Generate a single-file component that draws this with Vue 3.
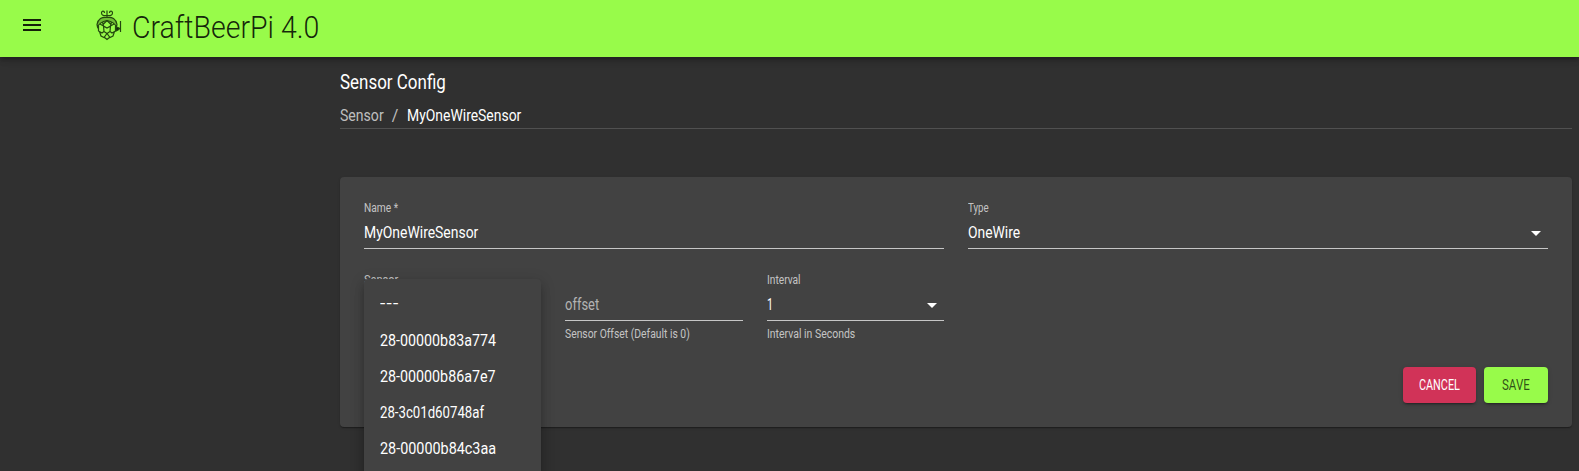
<script setup>
const items = [
  { text: '---', w: 19 },
  { text: '28-00000b83a774', w: 116 },
  { text: '28-00000b86a7e7', w: 116 },
  { text: '28-3c01d60748af', w: 104 },
  { text: '28-00000b84c3aa', w: 116 }
]

// Condenses a label horizontally to the given width.
const vFit = {
  mounted(el, { value }) {
    const apply = () => {
      const w = el.offsetWidth
      el.style.transform = `scaleX(${value / w})`
      el.style.marginRight = `${value - w}px`
    }
    apply()
    document.fonts.ready.then(apply)
  }
}
</script>

<template>
  <div class="page">
    <header class="appbar">
      <svg class="menu-icon" viewBox="0 0 24 24"><path d="M3 18h18v-2H3v2zm0-5h18v-2H3v2zm0-7v2h18V6H3z" /></svg>
      <svg class="hop" viewBox="0 0 26 32">
        <path d="M11 8V1.500M11 6.500C8 7 5.500 6.500 5.500 4C5.500 1.500 8.500 1.500 8.500 4M11 6.500C14 7 16.500 6.500 16.500 4C16.500 1.500 13.500 1.500 13.500 4" />
        <path class="leaf" d="M11 8.500C6 7.500 2 10 1 15.500L1.500 18C3 14.500 6 12.500 11 11.500C16 12.500 19 14.500 20.500 18L21 15.500C20 10 16 7.500 11 8.500" />
        <path d="M6.500 13L7.500 17L11 19L14.500 17L15.500 13M11 11.500L7.500 15M11 11.500L14.500 15M2.500 17L2.500 22L6 24L8 22.500L7.500 17L4 15M19.500 17V22L16 24L14 22.500L14.500 17L18 15M8 22.500L11 24.500L14 22.500M3.500 22.500L5 27L8 28.500L11 24.500L14 28.500L17 27L18.500 22.500M8 28L11 30.500L14 28" />
        <path d="M24.500 12V23M20 19.500H25" />
        <path class="joint" d="M20 18V22L23 20.500V19Z" />
      </svg>
      <h1 class="brand"><span v-fit="187" class="fit">CraftBeerPi 4.0</span></h1>
    </header>

    <main class="content">
      <h2 class="title"><span v-fit="106" class="fit">Sensor Config</span></h2>
      <nav class="crumbs">
        <span class="muted"><span v-fit="44" class="fit">Sensor</span></span>
        <span class="muted slash">/</span>
        <span v-fit="114" class="fit">MyOneWireSensor</span>
      </nav>

      <section class="card">
        <div class="grid">
          <div class="field wide">
            <label><span v-fit="34" class="fit">Name *</span></label>
            <div class="input"><span v-fit="114" class="fit">MyOneWireSensor</span></div>
          </div>
          <div class="field wide">
            <label><span v-fit="21" class="fit">Type</span></label>
            <div class="input">
              <span v-fit="52" class="fit">OneWire</span>
              <svg class="arrow" viewBox="0 0 24 24"><path d="M7 10l5 5 5-5z" /></svg>
            </div>
          </div>
          <div class="field">
            <label><span v-fit="34" class="fit">Sensor</span></label>
            <div class="input"></div>
            <ul class="menu">
              <li v-for="item in items" :key="item.text"><span v-fit="item.w" class="fit">{{ item.text }}</span></li>
            </ul>
          </div>
          <div class="field">
            <label></label>
            <div class="input placeholder"><span v-fit="34" class="fit">offset</span></div>
            <p class="helper"><span v-fit="125" class="fit">Sensor Offset (Default is 0)</span></p>
          </div>
          <div class="field">
            <label><span v-fit="34" class="fit">Interval</span></label>
            <div class="input">
              <span v-fit="6" class="fit">1</span>
              <svg class="arrow" viewBox="0 0 24 24"><path d="M7 10l5 5 5-5z" /></svg>
            </div>
            <p class="helper"><span v-fit="88" class="fit">Interval in Seconds</span></p>
          </div>
        </div>
        <div class="actions">
          <button class="cancel"><span v-fit="41" class="fit">CANCEL</span></button>
          <button class="save"><span v-fit="28" class="fit">SAVE</span></button>
        </div>
      </section>
    </main>
  </div>
</template>

<style>
body {
  background: #303030;
  overflow: hidden;
}
</style>

<style scoped>
* {
  box-sizing: border-box;
}
.page {
  height: 471px;
  overflow: hidden;
  background: #303030;
  color: #fff;
  font-family: Roboto, "Liberation Sans", sans-serif;
  font-size: 16px;
  line-height: 19px;
}
.fit {
  display: inline-block;
  white-space: nowrap;
  transform-origin: left center;
}
.appbar {
  position: relative;
  display: flex;
  height: 57px;
  padding-left: 20px;
  background: #98fb4a;
  color: rgba(0, 0, 0, 0.87);
  box-shadow: 0 2px 4px -1px rgba(0, 0, 0, 0.2), 0 4px 5px rgba(0, 0, 0, 0.14), 0 1px 10px rgba(0, 0, 0, 0.12);
}
.menu-icon {
  width: 24px;
  height: 24px;
  margin-top: 13px;
  fill: currentColor;
}
.hop {
  width: 26px;
  height: 32px;
  margin: 9px 0 0 52px;
  fill: none;
  stroke: #24480f;
  stroke-width: 1.2;
}
.leaf {
  fill: rgba(36, 72, 15, 0.35);
}
.joint {
  fill: #10240a;
}
.brand {
  margin: 7px 0 0 10px;
  font-size: 32px;
  font-weight: 300;
  line-height: 40px;
}
.content {
  margin: 0 7px 0 340px;
}
.title {
  margin: 0;
  padding-top: 13px;
  font-size: 20px;
  font-weight: 400;
  line-height: 24px;
}
.crumbs {
  display: flex;
  height: 35px;
  padding-top: 12px;
  border-bottom: 1px solid #505050;
}
.muted {
  color: rgba(255, 255, 255, 0.7);
}
.slash {
  width: 7px;
  margin: 0 8px;
}
.card {
  height: 250px;
  margin-top: 48px;
  padding: 24px;
  border-radius: 4px;
  background: #424242;
  box-shadow: 0 2px 1px -1px rgba(0, 0, 0, 0.2), 0 1px 1px rgba(0, 0, 0, 0.14), 0 1px 3px rgba(0, 0, 0, 0.12);
}
.grid {
  display: grid;
  grid-template-columns: repeat(6, 1fr);
  gap: 24px;
}
.field {
  position: relative;
}
.wide {
  grid-column: span 3;
}
label {
  display: block;
  height: 16px;
  color: rgba(255, 255, 255, 0.7);
  font-size: 12px;
  line-height: 14px;
}
.input {
  display: flex;
  justify-content: space-between;
  height: 32px;
  padding-top: 6px;
  border-bottom: 1px solid #c6c6c6;
}
.placeholder {
  color: #b3b3b3;
}
.arrow {
  width: 24px;
  height: 24px;
  margin-top: -2px;
  fill: #fff;
}
.helper {
  margin: 5px 0 1px;
  color: rgba(255, 255, 255, 0.7);
  font-size: 12px;
  line-height: 16px;
}
.menu {
  position: absolute;
  z-index: 2;
  top: 6px;
  left: 0;
  width: 177px;
  height: 220px;
  margin: 0;
  padding: 8px 0;
  border-radius: 4px;
  background: #424242;
  list-style: none;
  box-shadow: 0 5px 5px -3px rgba(0, 0, 0, 0.2), 0 8px 10px 1px rgba(0, 0, 0, 0.14), 0 3px 14px 2px rgba(0, 0, 0, 0.12);
}
.menu li {
  height: 36px;
  padding: 8px 16px;
}
.menu li:first-child {
  padding-top: 7px;
  letter-spacing: 1px;
}
.actions {
  display: flex;
  justify-content: flex-end;
  gap: 8px;
  margin-top: 24px;
}
button {
  display: flex;
  height: 36px;
  padding: 9px 16px;
  border: 0;
  border-radius: 4px;
  font: 400 14px/19px Roboto, "Liberation Sans", sans-serif;
  box-shadow: 0 3px 1px -2px rgba(0, 0, 0, 0.2), 0 2px 2px rgba(0, 0, 0, 0.14), 0 1px 5px rgba(0, 0, 0, 0.12);
}
.cancel {
  width: 73px;
  background: #d13358;
  color: #fff;
}
.save {
  width: 64px;
  padding-left: 18px;
  background: #98fb4a;
  color: rgba(0, 0, 0, 0.7);
}
</style>
